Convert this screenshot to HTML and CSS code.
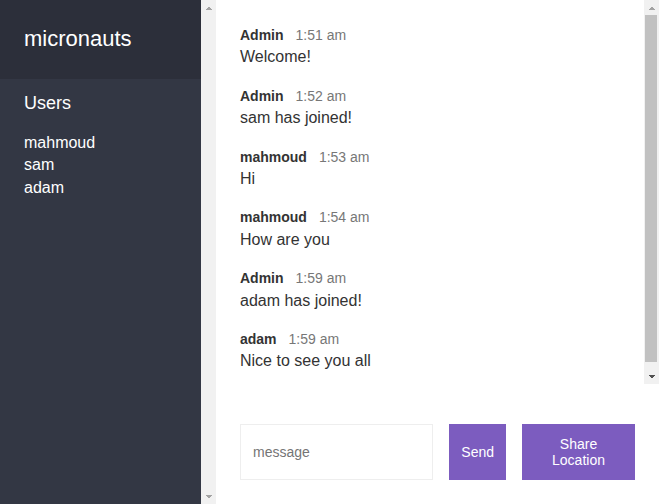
FILE: index.html
```html
<!DOCTYPE html>
<html>
<head>
<meta charset="utf-8">
<link rel="stylesheet" href="styles.css">
</head>
<body>
<div class="chat">
  <div class="chat__sidebar">
    <div class="sidebar__content">
      <h2 class="room-title">micronauts</h2>
      <h3 class="list-title">Users</h3>
      <ul class="users">
        <li>mahmoud</li>
        <li>sam</li>
        <li>adam</li>
      </ul>
    </div>
    <div class="scrollbar">
      <span class="scrollbar__btn scrollbar__btn--up"></span>
      <span class="scrollbar__track"></span>
      <span class="scrollbar__btn scrollbar__btn--down"></span>
    </div>
  </div>
  <div class="chat__main">
    <div class="chat__pane">
      <div class="chat__messages">
        <div class="message">
          <p><span class="message__name">Admin</span><span class="message__meta">1:51 am</span></p>
          <p>Welcome!</p>
        </div>
        <div class="message">
          <p><span class="message__name">Admin</span><span class="message__meta">1:52 am</span></p>
          <p>sam has joined!</p>
        </div>
        <div class="message">
          <p><span class="message__name">mahmoud</span><span class="message__meta">1:53 am</span></p>
          <p>Hi</p>
        </div>
        <div class="message">
          <p><span class="message__name">mahmoud</span><span class="message__meta">1:54 am</span></p>
          <p>How are you</p>
        </div>
        <div class="message">
          <p><span class="message__name">Admin</span><span class="message__meta">1:59 am</span></p>
          <p>adam has joined!</p>
        </div>
        <div class="message">
          <p><span class="message__name">adam</span><span class="message__meta">1:59 am</span></p>
          <p>Nice to see you all</p>
        </div>
      </div>
      <div class="scrollbar">
        <span class="scrollbar__btn scrollbar__btn--up"></span>
        <span class="scrollbar__track"><span class="scrollbar__thumb"></span></span>
        <span class="scrollbar__btn scrollbar__btn--down scrollbar__btn--active"></span>
      </div>
    </div>
    <div class="compose">
      <form class="compose__form">
        <input class="compose__input" name="message" placeholder="message">
        <button class="btn" type="button">Send</button>
      </form>
      <button class="btn btn--share" type="button">Share Location</button>
    </div>
  </div>
</div>
</body>
</html>
```

FILE: styles.css
```css
* {
  margin: 0;
  padding: 0;
  box-sizing: border-box;
}

body {
  color: #333333;
  font-family: "Liberation Sans", Arial, sans-serif;
  font-weight: 300;
  font-size: 16px;
  line-height: 1.4;
  overflow: hidden;
}

.chat {
  display: flex;
  height: 100vh;
}

/* drawn scrollbars */
.scrollbar {
  width: 15px;
  flex-shrink: 0;
  display: flex;
  flex-direction: column;
  background: #f1f1f1;
}

.scrollbar__btn {
  height: 15px;
  flex-shrink: 0;
  background-repeat: no-repeat;
  background-size: 8px 4px;
  background-position: 50% 50%;
}

.scrollbar__btn--up {
  background-image: conic-gradient(from 139deg at 50% 0, #a3a3a3 0 82deg, transparent 0);
}

.scrollbar__btn--down {
  background-image: conic-gradient(from -41deg at 50% 100%, #a3a3a3 0 82deg, transparent 0);
}

.scrollbar__btn--down.scrollbar__btn--active {
  background-image: conic-gradient(from -41deg at 50% 100%, #505050 0 82deg, transparent 0);
}

.scrollbar__track {
  flex-grow: 1;
  display: flex;
  flex-direction: column;
}

.scrollbar__thumb {
  flex-grow: 1;
  margin: 0 2px 7px 1px;
  background: #c1c1c1;
}

/* sidebar */
.chat__sidebar {
  display: flex;
  width: 216px;
  flex-shrink: 0;
  height: 100%;
  color: #ffffff;
  background: #333744;
}

.sidebar__content {
  flex-grow: 1;
  min-width: 0;
}

.room-title {
  font-weight: 400;
  font-size: 22px;
  background: #2c2f3a;
  padding: 24px;
}

.list-title {
  font-weight: 500;
  font-size: 18px;
  margin-bottom: 4px;
  padding: 12px 24px 0 24px;
}

.users {
  list-style-type: none;
  font-weight: 300;
  padding: 12px 24px 0 24px;
}

/* main */
.chat__main {
  flex-grow: 1;
  display: flex;
  flex-direction: column;
  height: 100%;
  min-width: 0;
}

.chat__pane {
  flex-grow: 1;
  display: flex;
  min-height: 0;
}

.chat__messages {
  flex-grow: 1;
  padding: 24px 24px 0 24px;
  overflow: hidden;
}

.message {
  margin-bottom: 16px;
}

.message__name {
  font-weight: 600;
  font-size: 14px;
  margin-right: 12px;
}

.message__meta {
  color: #777777;
  font-size: 14px;
}

.compose {
  display: flex;
  flex-shrink: 0;
  margin-top: 16px;
  padding: 24px;
}

.compose__form {
  flex-grow: 1;
  display: flex;
  margin-right: 16px;
}

.compose__input {
  border: 1px solid #eeeeee;
  width: 100%;
  padding: 12px;
  margin: 0 16px 0 0;
  flex-grow: 1;
  font-family: inherit;
  font-size: 14px;
  color: #333333;
  outline: none;
}

.compose__input::placeholder {
  color: #757575;
}

.btn {
  padding: 12px;
  background: #7c5cbf;
  border: none;
  color: #ffffff;
  font-family: "Liberation Sans", Arial, sans-serif;
  font-size: 14px;
}

.btn--share {
  width: 113px;
  flex-shrink: 0;
}
```
